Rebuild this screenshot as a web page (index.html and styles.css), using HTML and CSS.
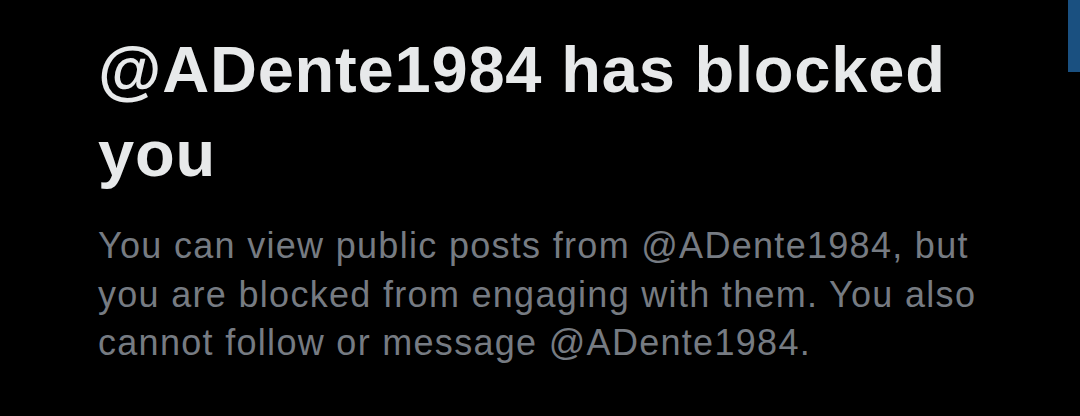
FILE: index.html
```html
<!DOCTYPE html>
<html lang="en">
<head>
<meta charset="UTF-8">
<meta name="viewport" content="width=device-width, initial-scale=1.0">
<title>Blocked</title>
<link rel="stylesheet" href="styles.css">
</head>
<body>
  <div class="scroll-thumb"></div>
  <div class="blocked">
    <h1 class="blocked-title">@ADente1984 has blocked you</h1>
    <p class="blocked-text">You can view public posts from @ADente1984, but you are blocked from engaging with them. You also cannot follow or message @ADente1984.</p>
  </div>
</body>
</html>
```

FILE: styles.css
```css
body {
  margin: 0;
  background-color: #000;
  font-family: "Liberation Sans", Arial, sans-serif;
}
.scroll-thumb {
  position: absolute;
  top: 0;
  right: 0;
  width: 12px;
  height: 72px;
  background-color: #1a5080;
}
.blocked {
  padding: 28px 0 0 98px;
  width: 890px;
}
.blocked-title {
  margin: 0;
  font-size: 65px;
  line-height: 84px;
  font-weight: bold;
  letter-spacing: 0.8px;
  color: #e7e9ea;
}
.blocked-text {
  margin: 26px 0 0;
  font-size: 36px;
  line-height: 48.5px;
  letter-spacing: 1.3px;
  color: #767b82;
}
```
